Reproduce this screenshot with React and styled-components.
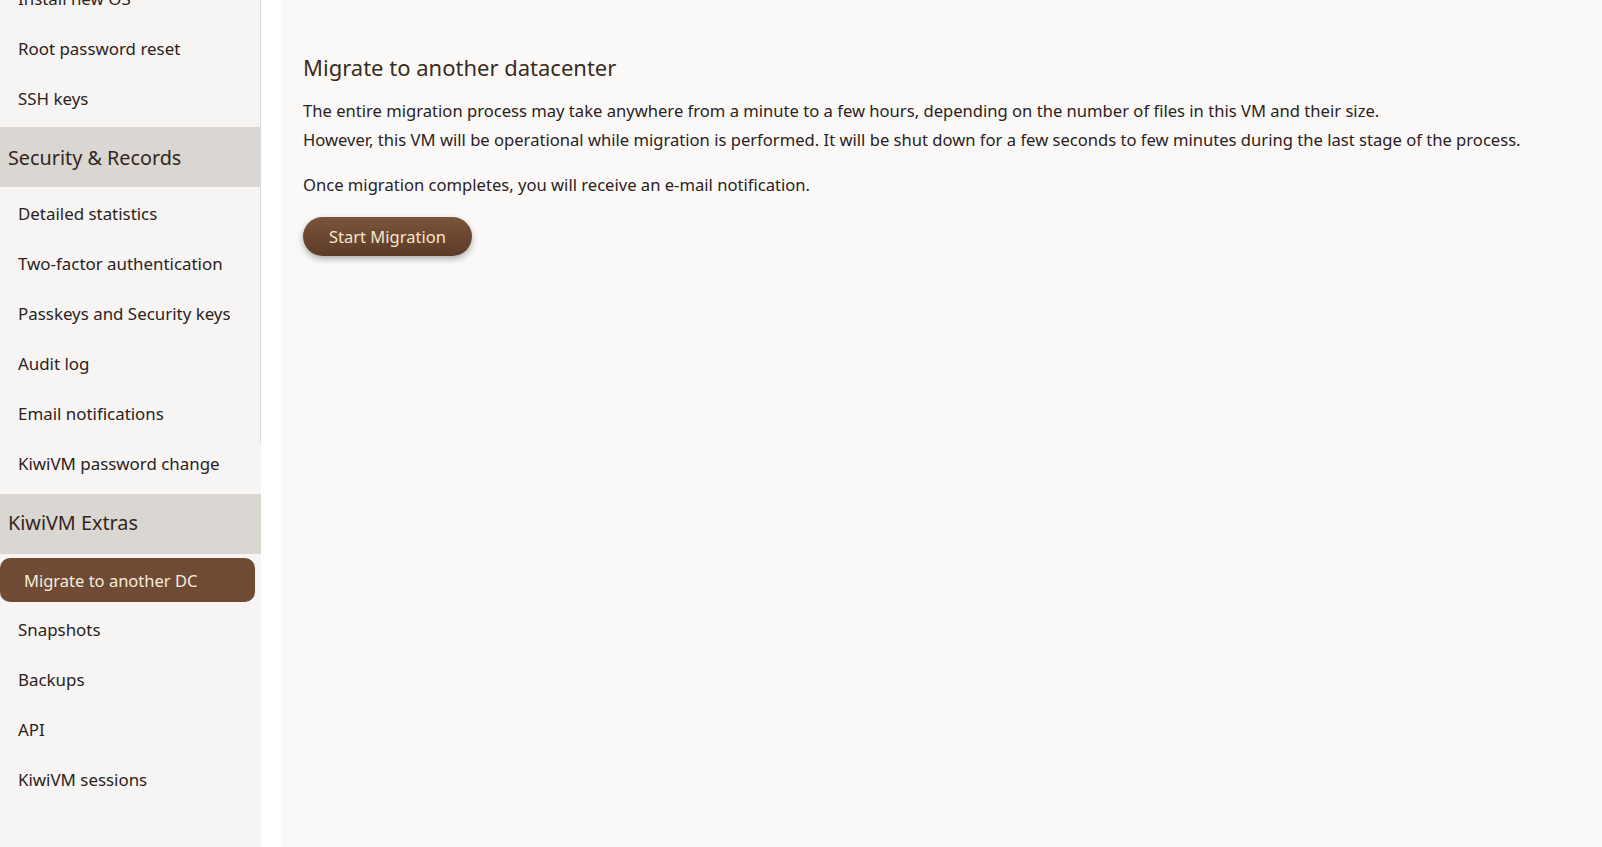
import React from 'react'
import styled, { createGlobalStyle } from 'styled-components'

const GlobalStyle = createGlobalStyle`
    html, body {
        margin: 0;
        padding: 0;
        background: #faf9f8;
    }
    body {
        font-family: "Noto Sans", "Open Sans", sans-serif;
        color: #2b221d;
    }
`

const nav = [
    { label: 'Install new OS' },
    { label: 'Root password reset' },
    { label: 'SSH keys' },
    { label: 'Security & Records', header: true },
    { label: 'Detailed statistics' },
    { label: 'Two-factor authentication' },
    { label: 'Passkeys and Security keys' },
    { label: 'Audit log' },
    { label: 'Email notifications' },
    { label: 'KiwiVM password change' },
    { label: 'KiwiVM Extras', header: true, spaced: true },
    { label: 'Migrate to another DC', active: true },
    { label: 'Snapshots' },
    { label: 'Backups' },
    { label: 'API' },
    { label: 'KiwiVM sessions' },
]

const App = () => {
    return (
        <Page>
            <GlobalStyle />
            <Sidebar>
                <NavList>
                    {nav.map((item) =>
                        item.header ? (
                            <NavHeader key={item.label} $spaced={item.spaced}>
                                {item.label}
                            </NavHeader>
                        ) : (
                            <NavItem key={item.label} $active={item.active}>
                                {item.label}
                            </NavItem>
                        )
                    )}
                </NavList>
            </Sidebar>
            <Gutter />
            <Main>
                <Title>Migrate to another datacenter</Title>
                <Text>
                    The entire migration process may take anywhere from a minute to a few hours, depending on the number of files in this VM and their size.
                    <br />
                    However, this VM will be operational while migration is performed. It will be shut down for a few seconds to few minutes during the last stage of the process.
                </Text>
                <Text>Once migration completes, you will receive an e-mail notification.</Text>
                <StartButton>Start Migration</StartButton>
            </Main>
        </Page>
    )
}

const Page = styled.div`
    display: flex;
    height: 847px;
    overflow: hidden;
`

const Sidebar = styled.aside`
    position: relative;
    width: 261px;
    flex-shrink: 0;
    background: #f6f5f3;
    overflow: hidden;

    &::after {
        content: '';
        position: absolute;
        top: 0;
        right: 0;
        width: 1px;
        height: 445px;
        background: #dedbd8;
    }
`

const NavList = styled.nav`
    display: flex;
    flex-direction: column;
    margin-top: -27px;
`

const NavItem = styled.div`
    display: flex;
    align-items: center;
    height: ${(p) => (p.$active ? '44px' : '50px')};
    margin: ${(p) => (p.$active ? '4px 6px 2px 0' : '0')};
    padding-left: ${(p) => (p.$active ? '24px' : '18px')};
    border-radius: ${(p) => (p.$active ? '10px' : '0')};
    background: ${(p) => (p.$active ? '#6f4b36' : 'transparent')};
    color: ${(p) => (p.$active ? '#f7ecdc' : '#2b221d')};
    font-size: ${(p) => (p.$active ? '16.5px' : '16.9px')};
    white-space: nowrap;
`

const NavHeader = styled.div`
    display: flex;
    align-items: center;
    height: 60px;
    margin: ${(p) => (p.$spaced ? '6px 0 0' : '4px 0 1px')};
    padding-left: 8px;
    padding-bottom: ${(p) => (p.$spaced ? '4px' : '0')};
    box-sizing: border-box;
    background: #dad6d2;
    color: #34261d;
    font-size: 19.8px;
`

const Gutter = styled.div`
    width: 20px;
    flex-shrink: 0;
    background: #ffffff;
`

const Main = styled.main`
    flex: 1;
    background: #faf9f8;
    padding: 52px 22px;
`

const Title = styled.h1`
    margin: 0 0 15px;
    font-size: 22px;
    line-height: 30px;
    font-weight: 400;
    color: #3a2b21;
`

const Text = styled.p`
    margin: 0 0 17px;
    font-size: 16.6px;
    line-height: 28.5px;
    color: #2b221d;
`

const StartButton = styled.button`
    height: 39px;
    padding: 0 26px;
    border: none;
    border-radius: 20px;
    background: linear-gradient(#7b543b, #5c3b27);
    box-shadow: 0 3px 6px rgba(0, 0, 0, 0.3);
    color: #f5e6cc;
    font-family: "Noto Sans", "Open Sans", sans-serif;
    font-size: 16.5px;
    cursor: pointer;
`

export default App
